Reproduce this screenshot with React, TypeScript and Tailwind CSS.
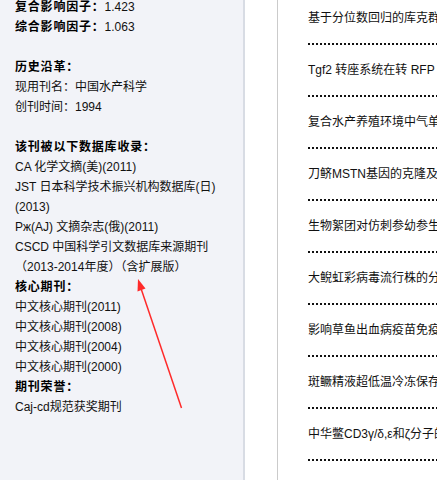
import React from 'react';

const font = { fontFamily: '"Liberation Sans", "Noto Sans CJK SC", sans-serif' };

const articles = [
    '基于分位数回归的库克群岛海域长鳍金枪鱼渔获率',
    'Tgf2 转座系统在转 RFP 基因金鱼中的整合',
    '复合水产养殖环境中气单胞菌的分离鉴定',
    '刀鲚MSTN基因的克隆及表达分析',
    '生物絮团对仿刺参幼参生长的影响',
    '大鲵虹彩病毒流行株的分离与鉴定',
    '影响草鱼出血病疫苗免疫效果的因素',
    '斑鳜精液超低温冷冻保存研究',
    '中华鳖CD3γ/δ,ε和ζ分子的克隆与表达',
];

function Label({ children }: { children: React.ReactNode }) {
    return <span className="font-bold text-black tracking-[0.8px]">{children}</span>;
}

export default function App() {
    return (
        <div className="relative flex h-[480px] w-[437px] overflow-hidden bg-white text-[12px] leading-[20px] text-[#111]" style={font}>
            <div className="w-[245px] shrink-0 border-r-2 border-[#d8dce4] bg-[#f2f3f8] pl-[15px]">
                <div className="-mt-[3px] whitespace-nowrap">
                    <div><Label>复合影响因子：</Label>1.423</div>
                    <div><Label>综合影响因子：</Label>1.063</div>
                    <div className="h-[20px]" />
                    <div><Label>历史沿革：</Label></div>
                    <div>现用刊名：中国水产科学</div>
                    <div>创刊时间：1994</div>
                    <div className="h-[20px]" />
                    <div><Label>该刊被以下数据库收录：</Label></div>
                    <div>CA 化学文摘(美)(2011)</div>
                    <div>JST 日本科学技术振兴机构数据库(日)</div>
                    <div>(2013)</div>
                    <div>Рж(AJ) 文摘杂志(俄)(2011)</div>
                    <div>CSCD 中国科学引文数据库来源期刊</div>
                    <div>（2013-2014年度）（含扩展版）</div>
                    <div><Label>核心期刊：</Label></div>
                    <div>中文核心期刊(2011)</div>
                    <div>中文核心期刊(2008)</div>
                    <div>中文核心期刊(2004)</div>
                    <div>中文核心期刊(2000)</div>
                    <div><Label>期刊荣誉：</Label></div>
                    <div>Caj-cd规范获奖期刊</div>
                </div>
            </div>

            <div className="w-[32px] shrink-0" />
            <div className="w-px shrink-0 bg-[#cbcbcb]" />

            <div className="min-w-0 flex-1 overflow-hidden pl-[30px] pt-[5px]">
                {articles.map((title) => (
                    <div key={title}>
                        <div className="h-[26px] whitespace-nowrap leading-[26px]">{title}</div>
                        <div className="flex h-[26px] items-start pt-[12px]">
                            <div className="h-[2px] w-[200px] bg-[repeating-linear-gradient(90deg,#111_0_2px,transparent_2px_4px)]" />
                        </div>
                    </div>
                ))}
            </div>

            <svg className="pointer-events-none absolute left-0 top-0" width="437" height="480">
                <line x1="181.5" y1="408" x2="140.5" y2="287" stroke="#ff2a2a" strokeWidth="1.5" />
                <polygon points="138,279 137.5,291.5 145.5,288.5" fill="#ff2a2a" />
            </svg>
        </div>
    );
}
